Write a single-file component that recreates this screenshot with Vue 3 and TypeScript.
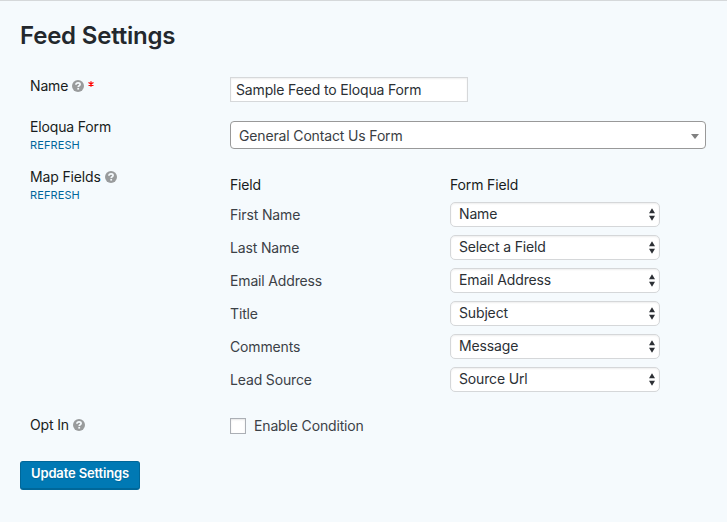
<script setup lang="ts">
import { ref, h, type FunctionalComponent } from 'vue'

interface FieldMapping {
  label: string
  value: string
}

const feedName = ref<string>('Sample Feed to Eloqua Form')
const optIn = ref<boolean>(false)

const mappings: FieldMapping[] = [
  { label: 'First Name', value: 'Name' },
  { label: 'Last Name', value: 'Select a Field' },
  { label: 'Email Address', value: 'Email Address' },
  { label: 'Title', value: 'Subject' },
  { label: 'Comments', value: 'Message' },
  { label: 'Lead Source', value: 'Source Url' },
]

const HelpIcon: FunctionalComponent = () =>
  h('svg', { viewBox: '0 0 12 12', width: 12, height: 12 }, [
    h('circle', { cx: 6, cy: 6, r: 6, fill: '#999b9c' }),
    h('path', {
      d: 'M3.900 4.700C4 3.400 4.900 2.800 6.100 2.800c1.200 0 2 .6 2 1.600 0 1.400-1.900 1.300-1.900 2.700',
      fill: 'none',
      stroke: '#f5fafd',
      'stroke-width': 1.7,
    }),
    h('rect', { x: 5.3, y: 7.9, width: 1.8, height: 1.7, fill: '#f5fafd' }),
  ])
</script>

<template>
  <main class="page">
    <h1 class="title">Feed Settings</h1>

    <section class="row row-name">
      <div class="label">
        <span>Name</span><HelpIcon class="help" /><svg class="required" viewBox="0 0 6 6" width="6" height="6">
          <path d="M3 .2v5.600M.5 1.600l5 2.800M5.500 1.600l-5 2.800" stroke="#f00" stroke-width="1.200" />
        </svg>
      </div>
      <input v-model="feedName" class="text-input" type="text" />
    </section>

    <section class="row row-form">
      <div>
        <div class="label">Eloqua Form</div>
        <a class="refresh">REFRESH</a>
      </div>
      <div class="combo">
        <span>General Contact Us Form</span>
        <svg viewBox="0 0 8 5" width="8" height="5"><path d="M0 0h8L4 5z" fill="#808080" /></svg>
      </div>
    </section>

    <section class="row row-map">
      <div>
        <div class="label"><span>Map Fields</span><HelpIcon class="help" /></div>
        <a class="refresh">REFRESH</a>
      </div>
      <div class="map">
        <div class="map-head">
          <span>Field</span>
          <span>Form Field</span>
        </div>
        <div v-for="item in mappings" :key="item.label" class="map-row">
          <span class="map-label">{{ item.label }}</span>
          <div class="select">
            <span class="select-value">{{ item.value }}</span>
            <svg viewBox="0 0 6 13" width="6" height="13">
              <path d="M0 5.300L3 .3l3 5zM0 7.700l3 5 3-5z" fill="#2d3035" />
            </svg>
          </div>
        </div>
      </div>
    </section>

    <section class="row row-opt">
      <div class="label"><span>Opt In</span><HelpIcon class="help" /></div>
      <label class="check">
        <input v-model="optIn" type="checkbox" />
        <span>Enable Condition</span>
      </label>
    </section>

    <button class="submit" type="button">Update Settings</button>
  </main>
</template>

<style>
body {
  background: #f5fafd;
}
</style>

<style scoped>
.page {
  box-sizing: border-box;
  height: 522px;
  padding: 20px 20px 0;
  border-top: 1px solid #d5d8da;
  background: #f5fafd;
  color: #23282d;
  font: 14px/18px Inter, "Liberation Sans", sans-serif;
  letter-spacing: -0.15px;
}

.title {
  margin: 0;
  height: 56px;
  font-size: 24px;
  line-height: 29px;
  font-weight: 600;
  letter-spacing: -0.2px;
}

.row {
  display: grid;
  grid-template-columns: 200px 1fr;
  align-items: start;
  padding-left: 10px;
}

.row-name {
  height: 44px;
}

.row-form {
  height: 49px;
}

.row-map {
  height: 246px;
}

.row-opt {
  height: 45px;
}

.label {
  display: flex;
  align-items: center;
  color: #181c20;
}

.row-form .label {
  margin-top: -3px;
}

.row-map .label {
  margin-top: -2px;
}

.help {
  margin-left: 4px;
}

.required {
  margin-left: 4px;
  margin-top: -5px;
}

.refresh {
  display: block;
  color: #00669b;
  font-size: 11px;
  letter-spacing: 0.1px;
}

.text-input {
  box-sizing: border-box;
  width: 238px;
  height: 25px;
  margin: 0;
  padding: 0 5px 1px;
  border: 1px solid #d6d8da;
  background: #fff;
  box-shadow: inset 0 1px 2px rgba(0, 0, 0, 0.07);
  color: #2b3035;
  font: inherit;
  letter-spacing: inherit;
  outline: none;
}

.combo {
  box-sizing: border-box;
  display: flex;
  align-items: center;
  justify-content: space-between;
  width: 476px;
  height: 28px;
  padding: 2px 6px 0 8px;
  border: 1px solid #999;
  border-radius: 4px;
  background: #fff;
  color: #3a3e43;
}

.map {
  padding-top: 6px;
}

.map-head {
  display: grid;
  grid-template-columns: 220px 1fr;
  height: 26px;
  color: #181c20;
}

.map-row {
  display: grid;
  grid-template-columns: 220px 210px;
  height: 33px;
}

.map-label {
  padding-top: 4px;
  color: #3c4147;
}

.select {
  box-sizing: border-box;
  display: flex;
  align-items: center;
  justify-content: space-between;
  height: 25px;
  padding: 0 4px 0 8px;
  border: 1px solid #d5d7d9;
  border-radius: 5px;
  background: #fff;
  box-shadow: inset 0 1px 2px rgba(0, 0, 0, 0.07);
  color: #2b3035;
}

.select-value {
  padding-bottom: 2px;
}

.check {
  display: flex;
  align-items: center;
  gap: 8px;
  padding-top: 1px;
  color: #3c4147;
}

.check input {
  appearance: none;
  box-sizing: border-box;
  width: 16px;
  height: 16px;
  margin: 0;
  border: 1px solid #abafb5;
  background: #fff;
  box-shadow: inset 0 1px 2px rgba(0, 0, 0, 0.1);
}

.submit {
  display: block;
  width: 120px;
  height: 29px;
  margin: 0;
  padding: 0 0 4px;
  border: 1px solid #006799;
  border-bottom-width: 2px;
  border-radius: 3px;
  background: #0079b4;
  color: #fff;
  font: 600 13px/18px Inter, "Liberation Sans", sans-serif;
  letter-spacing: -0.15px;
  text-shadow: 0 1px 1px #006799;
}
</style>
